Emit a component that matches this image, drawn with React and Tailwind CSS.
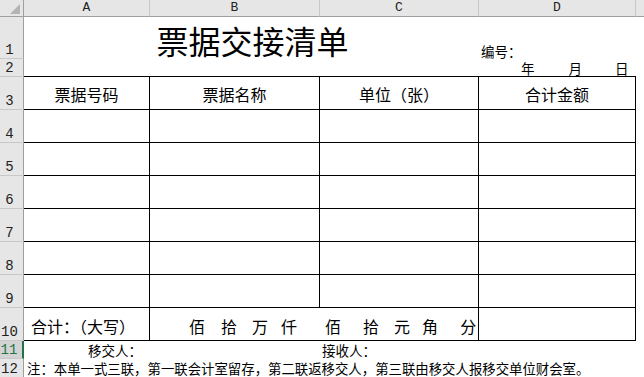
import React from 'react';

const CJK = "font-['Noto_Sans_CJK_SC',sans-serif]";
const MONO = "font-['Liberation_Mono',monospace]";

const TABLE_HEADS = ['票据号码', '票据名称', '单位（张）', '合计金额'];

// widths of columns A..D, right border included
const COL_W = ['w-[126px]', 'w-[170px]', 'w-[159px]', 'w-[157px]'];

function RowHead({ n, active = false }) {
  return (
    <div
      className={`w-[24px] shrink-0 flex items-end justify-center pr-[6px] pb-[1px] border-b border-b-[#c8c8c8] ${MONO} text-[14px] leading-none ${
        active
          ? 'bg-[#d3d3d3] text-[#217346] border-r-2 border-r-[#217346]'
          : 'bg-[#e6e6e6] text-[#222] border-r border-r-[#9f9f9f]'
      }`}
    >
      <span className="pl-[2px]">{n}</span>
    </div>
  );
}

function EmptyRow({ n }) {
  return (
    <div className="flex h-[33px]">
      <RowHead n={n} />
      {COL_W.map((w, i) => (
        <div key={i} className={`${w} shrink-0 border-r border-b border-black`} />
      ))}
      <div className="flex-1" />
    </div>
  );
}

export default function App() {
  return (
    <div className={`w-[644px] h-[377px] overflow-hidden bg-white text-black ${CJK}`}>
      {/* column header */}
      <div className="flex h-[17px]">
        <div className="w-[24px] shrink-0 bg-[#e6e6e6] border-r border-b border-[#9f9f9f] flex items-end justify-end pr-[3px] pb-[2px]">
          <svg width="10" height="10" viewBox="0 0 10 10">
            <polygon points="10,0 10,10 0,10" fill="#b4b4b4" />
          </svg>
        </div>
        {['A', 'B', 'C', 'D'].map((c, i) => (
          <div
            key={c}
            className={`${COL_W[i]} shrink-0 bg-[#e6e6e6] border-r border-r-[#c8c8c8] border-b border-b-[#9f9f9f] flex items-center justify-center ${MONO} text-[13px] text-[#222]`}
          >
            {c}
          </div>
        ))}
        <div className="flex-1 bg-[#e6e6e6] border-b border-b-[#9f9f9f]" />
      </div>

      {/* row 1: title */}
      <div className="flex h-[42px]">
        <RowHead n="1" />
        <div className="w-[455px] shrink-0 flex items-end justify-center">
          <span className="text-[32px] leading-none pb-[3px] pl-[2px]">票据交接清单</span>
        </div>
        <div className="w-[157px] shrink-0 flex items-end pl-[2px] pb-[1px]">
          <span className="text-[13.5px] leading-none">编号：</span>
        </div>
        <div className="flex-1" />
      </div>

      {/* row 2: date */}
      <div className="flex h-[18px]">
        <RowHead n="2" />
        {COL_W.slice(0, 3).map((w, i) => (
          <div key={i} className={`${w} shrink-0 border-b border-black`} />
        ))}
        <div className="w-[157px] shrink-0 border-b border-black flex items-end pb-[1px] text-[13.5px] leading-none">
          <span className="ml-[42px]">年</span>
          <span className="ml-[34px]">月</span>
          <span className="ml-[33px]">日</span>
        </div>
        <div className="flex-1" />
      </div>

      {/* row 3: table heads */}
      <div className="flex h-[33px]">
        <RowHead n="3" />
        {TABLE_HEADS.map((t, i) => (
          <div
            key={t}
            className={`${COL_W[i]} shrink-0 border-r border-b border-black flex items-center justify-center pt-[2px] text-[16px] leading-none`}
          >
            {t}
          </div>
        ))}
        <div className="flex-1" />
      </div>

      {[4, 5, 6, 7, 8, 9].map((n) => (
        <EmptyRow key={n} n={n} />
      ))}

      {/* row 10: totals */}
      <div className="flex h-[33px]">
        <RowHead n="10" />
        <div className="w-[126px] shrink-0 border-r border-b border-black flex items-center pl-[7px] pt-[4px] text-[16px] leading-none">
          合计：（大写）
        </div>
        <div className="w-[329px] shrink-0 border-r border-b border-black flex items-center pt-[4px] text-[16px] leading-none">
          <span className="ml-[39px]">佰</span>
          <span className="ml-[16px]">拾</span>
          <span className="ml-[15px]">万</span>
          <span className="ml-[13px]">仟</span>
          <span className="ml-[28px]">佰</span>
          <span className="ml-[22px]">拾</span>
          <span className="ml-[15px]">元</span>
          <span className="ml-[12px]">角</span>
          <span className="ml-[22px]">分</span>
        </div>
        <div className="w-[157px] shrink-0 border-r border-b border-black" />
        <div className="flex-1" />
      </div>

      {/* row 11: signatures */}
      <div className="flex h-[18px]">
        <RowHead n="11" active />
        <div className="flex-1 flex items-end pb-[2px] text-[13.5px] leading-none">
          <span className="ml-[64px]">移交人：</span>
          <span className="ml-[180px]">接收人：</span>
        </div>
      </div>

      {/* row 12: note */}
      <div className="flex h-[19px]">
        <RowHead n="12" />
        <div className="flex-1 flex items-end pb-[3px] pl-[3px] text-[13.4px] leading-none whitespace-nowrap">
          注：本单一式三联，第一联会计室留存，第二联返移交人，第三联由移交人报移交单位财会室。
        </div>
      </div>
    </div>
  );
}
